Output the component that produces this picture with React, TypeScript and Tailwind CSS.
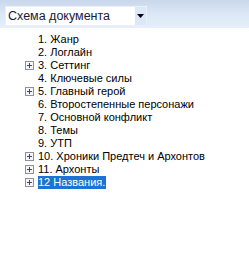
import { useState } from "react";

const items = [
  { label: "1. Жанр", plus: false },
  { label: "2. Логлайн", plus: false },
  { label: "3. Сеттинг", plus: true },
  { label: "4. Ключевые силы", plus: false },
  { label: "5. Главный герой", plus: true },
  { label: "6. Второстепенные персонажи", plus: false },
  { label: "7. Основной конфликт", plus: false },
  { label: "8. Темы", plus: false },
  { label: "9. УТП", plus: false },
  { label: "10. Хроники Предтеч и Архонтов", plus: true },
  { label: "11. Архонты", plus: true },
  { label: "12 Названия.", plus: true },
];

function PlusBox() {
  return (
    <svg width="9" height="9" viewBox="0 0 9 9" className="block">
      <rect x="0.5" y="0.5" width="8" height="8" fill="#f4f4f4" stroke="#919191" />
      <path d="M2 4.5h5M4.5 2v5" stroke="#2c4a8c" strokeWidth="1" />
    </svg>
  );
}

export default function App() {
  const [selected, setSelected] = useState(11);

  return (
    <div className="w-[249px] h-[268px] bg-white font-['Liberation_Sans',Arial,sans-serif] overflow-hidden">
      <div className="h-[28px] bg-gradient-to-b from-[#c8d7ea] via-[#dce8f7] to-[#e6effb] pt-[6px] pl-[5px]">
        <div className="w-[142px] h-[20px] bg-white border border-[#e9f0f9] flex items-center">
          <span className="flex-1 pl-[2px] text-[12.5px] text-[#1b1b3a] leading-none">Схема документа</span>
          <div className="w-[12px] h-[18px] bg-[#dce8f8] border-l border-white flex items-center justify-center">
            <svg width="7" height="4" viewBox="0 0 7 4">
              <path d="M0 0h7L3.5 4z" fill="#000" />
            </svg>
          </div>
        </div>
      </div>
      <ul className="pt-[5px]">
        {items.map((it, i) => (
          <li key={i} className="h-[13px] flex items-center" onClick={() => setSelected(i)}>
            <div className="w-[25px]" />
            <div className="w-[13px]">{it.plus && <PlusBox />}</div>
            <span
              className={`text-[11px] leading-[13px] h-[13px] whitespace-nowrap ${
                selected === i ? "bg-[#1c73d1] text-white pr-[1px]" : "text-black"
              }`}
            >
              {it.label}
            </span>
          </li>
        ))}
      </ul>
    </div>
  );
}
